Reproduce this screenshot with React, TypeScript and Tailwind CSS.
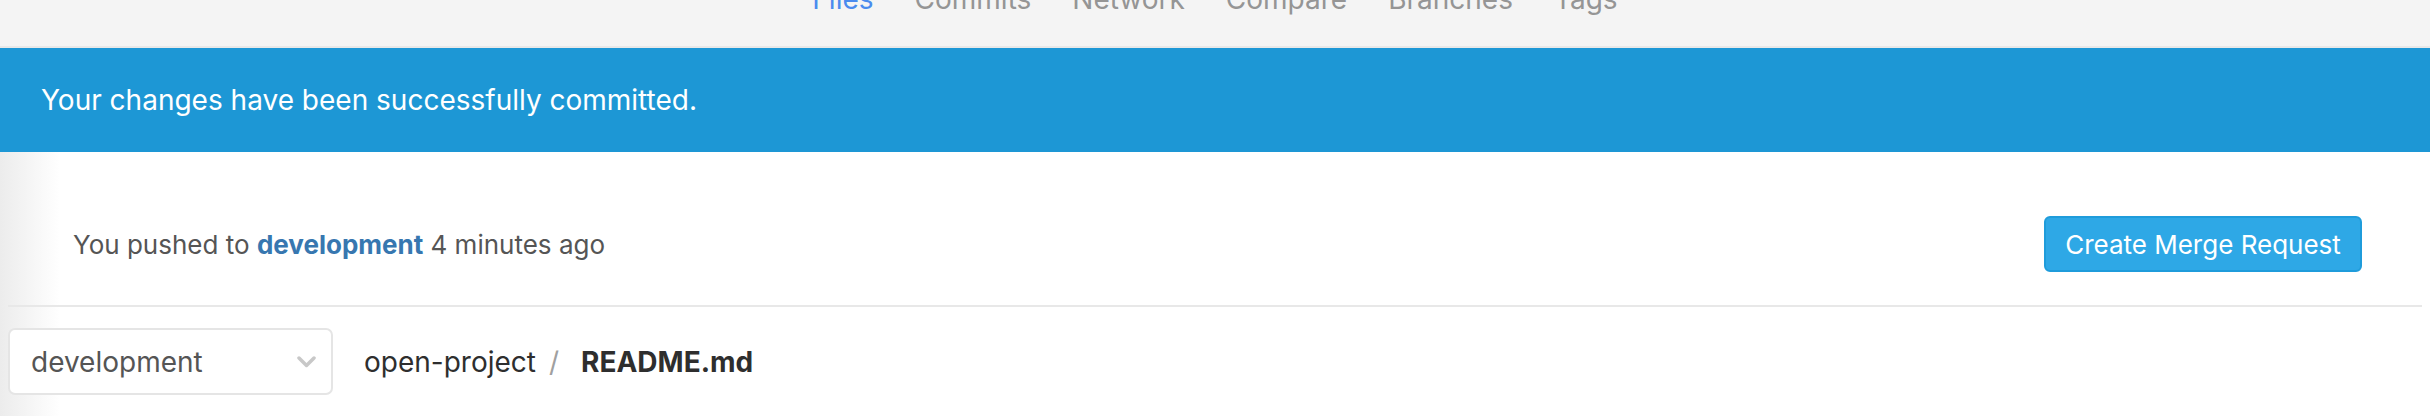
export default function App() {
  const tabs = ['Files', 'Commits', 'Network', 'Compare', 'Branches', 'Tags'];

  return (
    <div className="w-[2430px] h-[416px] overflow-hidden bg-white font-['Inter',sans-serif] antialiased">
      {/* Sub nav, cut off at the top */}
      <div className="h-[48px] bg-[#f4f4f4] border-b-2 border-[#e8e8e8] overflow-hidden">
        <nav className="-mt-[14px] flex justify-center gap-[41px] text-[28px] leading-[27px]">
          {tabs.map((t) => (
            <a
              key={t}
              href="#"
              className={t === 'Files' ? 'text-[#4a8bee]' : 'text-[#959595]'}
            >
              {t}
            </a>
          ))}
        </nav>
      </div>

      {/* Flash notice */}
      <div className="h-[104px] bg-[#1d97d5] flex items-center px-[41px] text-white text-[28px]">
        Your changes have been successfully committed.
      </div>

      {/* Content */}
      <div className="h-[264px] px-[8px] bg-[linear-gradient(to_right,#ececec,#ffffff_60px)]">
        <div className="flex items-center justify-between pt-[64px] pb-[33px] pl-[65px] pr-[60px] border-b-2 border-[#e8e8e8]">
          <p className="text-[26px] text-[#555555]">
            You pushed to{' '}
            <a href="#" className="font-bold text-[#3777b0]">
              development
            </a>{' '}
            4 minutes ago
          </p>
          <button className="w-[318px] h-[56px] flex items-center justify-center rounded-[6px] border-2 border-[#1f9cdb] bg-[#2ea8e6] text-white text-[26px]">
            Create Merge Request
          </button>
        </div>

        <div className="flex items-center pt-[21px]">
          <div className="w-[325px] h-[67px] flex items-center justify-between pl-[21px] pr-[15px] border-2 border-[#e5e5e5] rounded-[7px] bg-white text-[28px] text-[#555555]">
            <span>development</span>
            <svg width="19" height="12" viewBox="0 0 19 12" fill="none">
              <polyline
                points="2,2 9.5,9.5 17,2"
                stroke="#c8c8c8"
                strokeWidth="3.5"
                strokeLinecap="round"
                strokeLinejoin="round"
              />
            </svg>
          </div>
          <div className="ml-[31px] flex items-center text-[28px] text-[#2e2e2e]">
            <span>open-project</span>
            <span className="ml-[13px] mr-[22px] text-[#a0a0a0]">/</span>
            <strong className="font-bold">README.md</strong>
          </div>
        </div>
      </div>
    </div>
  );
}
